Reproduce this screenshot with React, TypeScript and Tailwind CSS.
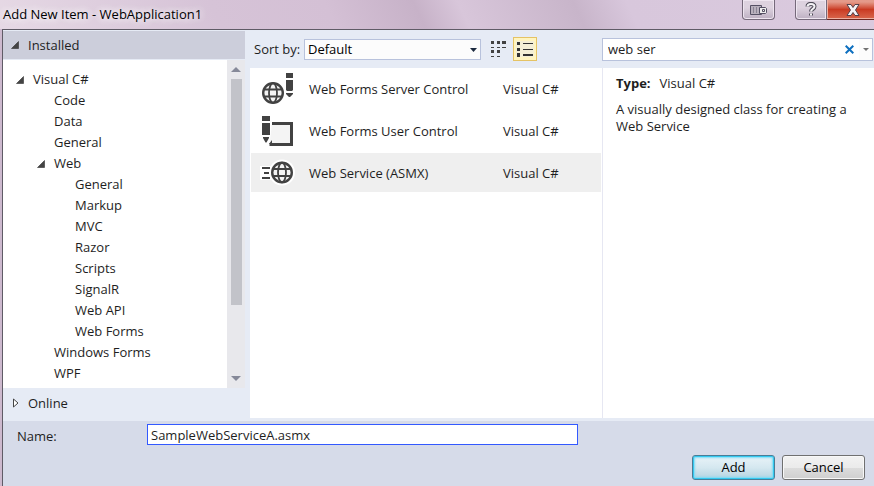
import { useState } from "react";

type Node = { label: string; level: 0 | 1 | 2; open?: boolean };

const TREE: Node[] = [
  { label: "Visual C#", level: 0, open: true },
  { label: "Code", level: 1 },
  { label: "Data", level: 1 },
  { label: "General", level: 1 },
  { label: "Web", level: 1, open: true },
  { label: "General", level: 2 },
  { label: "Markup", level: 2 },
  { label: "MVC", level: 2 },
  { label: "Razor", level: 2 },
  { label: "Scripts", level: 2 },
  { label: "SignalR", level: 2 },
  { label: "Web API", level: 2 },
  { label: "Web Forms", level: 2 },
  { label: "Windows Forms", level: 1 },
  { label: "WPF", level: 1 },
];

const INDENT = { 0: "pl-3", 1: "pl-[33px]", 2: "pl-[54px]" };

function OpenArrow() {
  return (
    <svg className="size-2 shrink-0" viewBox="0 0 8 8" aria-hidden="true">
      <path d="M7.5 0.5V7.5H0.5z" fill="#444" stroke="#333" strokeWidth="0.6" />
    </svg>
  );
}

function Globe({ cx, cy }: { cx: number; cy: number }) {
  return (
    <g transform={`translate(${cx} ${cy})`} fill="none" stroke="#424242" strokeWidth="1.8">
      <circle r="9.8" fill="#f4f4f4" strokeWidth="2.4" />
      <ellipse rx="4" ry="9.8" />
      <path d="M-9 -3.500H9M-9 3.500H9" />
    </g>
  );
}

function ServerControlIcon() {
  return (
    <svg className="size-8 shrink-0" viewBox="0 0 32 32" aria-hidden="true">
      <Globe cx={11} cy={20} />
      <path d="M24 0h7v5h-7zM24 7h7v10l-1 1h-5l-1-1zM24 20h7v1L28 24h-1L24 21z" fill="#424242" />
    </svg>
  );
}

function UserControlIcon() {
  return (
    <svg className="size-8 shrink-0" viewBox="0 0 32 32" aria-hidden="true">
      <path d="M10 8.500H29.500V29.500H7.500" fill="#f4f4f4" stroke="#424242" strokeWidth="3" />
      <path d="M0 1h8v5H0zM0 8h8v12H0zM1 22h6v1L4.500 27.500h-1L1 23zM10 25v4H7z" fill="#424242" />
    </svg>
  );
}

function WebServiceIcon() {
  return (
    <svg className="size-8 shrink-0 overflow-visible" viewBox="0 0 32 32" aria-hidden="true">
      <path d="M-2 9H20V23H-2z" fill="#fff" />
      <circle cx="20" cy="15.500" r="13" fill="#fff" />
      <path d="M0 11h8M2 16h5M0 21h8" stroke="#424242" strokeWidth="2" />
      <Globe cx={20} cy={15.5} />
    </svg>
  );
}

const ITEMS = [
  { name: "Web Forms Server Control", Icon: ServerControlIcon },
  { name: "Web Forms User Control", Icon: UserControlIcon },
  { name: "Web Service (ASMX)", Icon: WebServiceIcon },
];

function TitleBar() {
  const glass = "flex h-5 items-center justify-center border border-t-0 border-[#75697a] bg-linear-to-b from-[#ddd2df] from-40% to-[#bdb0c2] shadow-[inset_0_0_0_1px_#eee5f0]";
  return (
    <header className="flex h-[29px] items-start bg-[linear-gradient(65deg,#e6d9e5_0%,#d6c3d7_25%,#d4c0d5_38%,#c7b2c8_48%,#d8c6da_53%,#c8b5ca_66%,#d8c7dc_72%,#dacade_100%)]">
      <h1 className="flex-1 pt-1 pl-[3px] text-[13px] leading-5 text-black [text-shadow:0_0_8px_white,0_0_8px_white]">
        Add New Item - WebApplication1
      </h1>
      <button aria-label="Dock" className={`${glass} w-[33px] rounded-b`}>
        <svg className="h-[10px] w-[17px]" viewBox="0 0 17 10" fill="none" stroke="#555064" aria-hidden="true">
          <path d="M0.500 0.500H11.500V9.500H0.500z" fill="#b8b0bd" />
          <path d="M3.500 2v6M6.500 2v6" stroke="#8a8494" />
          <path d="M9.500 2.500H15.500l1 1V7.500l-1 1H9.500z" fill="#eee" />
          <path d="M12.500 4.500h2v2h-2z" />
        </svg>
      </button>
      <div className="ml-5 flex">
        <button aria-label="Help" className={`${glass} w-8 rounded-bl`}>
          <svg className="h-[15px] w-3" viewBox="0 0 12 15" fill="none" aria-hidden="true">
            <path d="M2.500 4.500C2.500 1 9.500 1 9.500 4.500C9.500 7 6 7 6 9.500M6 11.500V13.500" stroke="#4c4856" strokeWidth="4" />
            <path d="M2.500 4.500C2.500 1 9.500 1 9.500 4.500C9.500 7 6 7 6 9.500M6 11.500V13.500" stroke="#f5f3f6" strokeWidth="2" />
          </svg>
        </button>
        <button
          aria-label="Close"
          className="flex h-5 w-[47px] items-center justify-center border-b border-[#6d2923] bg-linear-to-b from-[#e49a8a] from-10% via-[#c93a22] via-50% to-[#d9664c] pl-1 shadow-[inset_1px_-1px_0_0_#eeb0a2]"
        >
          <svg className="h-3 w-[14px]" viewBox="0 0 14 12" aria-hidden="true">
            <path d="M1 0.500H5L7 3.500L9 0.500H13L9.500 6L13 11.500H9L7 8.500L5 11.500H1L4.500 6z" fill="#f5f3f6" stroke="#54404a" />
          </svg>
        </button>
      </div>
    </header>
  );
}

function Sidebar() {
  return (
    <nav className="flex w-[242px] shrink-0 flex-col pt-px" aria-label="Categories">
      <button className="flex h-7 items-center gap-[9px] bg-[#cccedb] pl-2">
        <OpenArrow />
        <span>Installed</span>
      </button>
      <div className="mt-px flex flex-1 bg-white">
        <ul className="flex-1 pt-[9px] pb-1">
          {TREE.map((n, i) => (
            <li key={i} className={`flex h-[21px] items-center ${INDENT[n.level]}`}>
              <span className="flex w-[18px] shrink-0 pl-px">{n.open && <OpenArrow />}</span>
              <span className="whitespace-nowrap">{n.label}</span>
            </li>
          ))}
        </ul>
        <div className="flex w-[18px] flex-col items-center bg-[#e8e8ec] py-[7px]">
          <svg className="h-[5px] w-[10px]" viewBox="0 0 10 5" fill="#868999" aria-hidden="true">
            <path d="M5 0L10 5H0z" />
          </svg>
          <div className="mt-[7px] w-[11px] flex-1 bg-[#c2c3c9]" />
          <svg className="mt-[71px] h-[5px] w-[10px]" viewBox="0 0 10 5" fill="#868999" aria-hidden="true">
            <path d="M0 0H10L5 5z" />
          </svg>
        </div>
      </div>
      <button className="mb-[3px] flex h-[30px] items-center gap-[9px] pl-[10px]">
        <svg className="h-[10px] w-[6px]" viewBox="0 0 6 10" fill="#fff" stroke="#444" aria-hidden="true">
          <path d="M0.500 1V9L5 5z" />
        </svg>
        <span>Online</span>
      </button>
    </nav>
  );
}

function Toolbar({ query, setQuery }: { query: string; setQuery: (v: string) => void }) {
  return (
    <div className="flex h-[38px] items-center">
      <div className="flex flex-1 items-center pl-1">
        <label htmlFor="sort" className="w-[50px]">
          Sort by:
        </label>
        <div className="relative">
          <select id="sort" className="block h-[21px] w-[177px] appearance-none border border-[#b8c2dc] bg-[#fcfcfc] pl-[3px] leading-[19px] text-black">
            <option>Default</option>
          </select>
          <svg className="pointer-events-none absolute top-[9px] right-1 h-[4px] w-[7px]" viewBox="0 0 7 4" fill="#1b293e" aria-hidden="true">
            <path d="M0 0H7L3.500 4z" />
          </svg>
        </div>
        <button aria-label="Small icons" className="ml-[5px] flex size-6 items-center justify-center">
          <svg className="h-4 w-4" viewBox="0 0 16 16" fill="#424242" aria-hidden="true">
            <path d="M1 0h3v3H1zM7 0h3v3H7zM12 0h4v3h-4zM1 6h3v1H1zM7 6h3v1H7zM12 6h4v1h-4zM1 9h3v3H1zM7 9h3v3H7zM1 15h3v1H1zM7 15h3v1H7z" />
          </svg>
        </button>
        <button aria-label="Medium icons" className="ml-[3px] flex size-6 items-center justify-center border border-[#e5c365] bg-[#fff4bf]">
          <svg className="h-4 w-[18px]" viewBox="0 0 18 16" aria-hidden="true">
            <path d="M0 0H18V16H0z" fill="#e9e9ee" opacity="0.500" />
            <path d="M1 1h3v3H1zM1 7h3v3H1zM1 12h3v4H1zM7 2h10v1H7zM7 8h10v1H7zM7 13h10v2H7z" fill="#333" />
          </svg>
        </button>
      </div>
      <div className="w-[272px] pr-px">
        <div className="flex h-[23px] items-center border border-[#b8c2dc] bg-white">
          <input
            aria-label="Search installed templates"
            value={query}
            onChange={(e) => setQuery(e.target.value)}
            className="h-full min-w-0 flex-1 pl-[5px] outline-none"
          />
          <button aria-label="Clear search" onClick={() => setQuery("")} className="flex h-full w-5 items-center justify-center">
            <svg className="size-[9px]" viewBox="0 0 9 9" stroke="#0e70c0" strokeWidth="2" aria-hidden="true">
              <path d="M0.700 0.700L8.300 8.300M8.300 0.700L0.700 8.300" />
            </svg>
          </button>
          <button aria-label="Search options" className="flex h-full w-[13px] items-center justify-center bg-[#fcfcfc]">
            <svg className="h-[3px] w-[6px]" viewBox="0 0 6 3" fill="#717171" aria-hidden="true">
              <path d="M0 0H6L3 3z" />
            </svg>
          </button>
        </div>
      </div>
    </div>
  );
}

export default function App() {
  const [query, setQuery] = useState("web ser");
  const [name, setName] = useState("SampleWebServiceA.asmx");
  const [selected, setSelected] = useState(2);

  return (
    <div className="flex min-h-screen flex-col bg-[#cdb9ce] font-['Open_Sans',sans-serif] text-[13px] leading-[17px] text-[#1e1e1e]">
      <TitleBar />
      <main className="ml-[2px] flex flex-1 flex-col border-t border-l border-[#5f5b66] bg-[#d6dbe9]">
        <div className="flex bg-[#e6ebf5]">
          <Sidebar />
          <section className="ml-[5px] flex min-w-0 flex-1 flex-col pb-[3px]">
            <Toolbar query={query} setQuery={setQuery} />
            <div className="flex flex-1 bg-white">
              <ul className="flex flex-1 flex-col gap-[3px] px-px pt-px">
                {ITEMS.map(({ name, Icon }, i) => (
                  <li key={name}>
                    <button
                      onClick={() => setSelected(i)}
                      className={`flex h-[39px] w-full items-center pt-px pl-[11px] text-left ${selected === i ? "bg-[#efefef]" : ""}`}
                    >
                      <Icon />
                      <span className="ml-[15px] flex-1">{name}</span>
                      <span className="w-[98px]">Visual C#</span>
                    </button>
                  </li>
                ))}
              </ul>
              <aside className="w-[272px] border-l border-[#e6e7f2] pt-[7px] pr-4 pl-[13px]">
                <p>
                  <strong className="mr-[9px] font-bold">Type:</strong>
                  Visual C#
                </p>
                <p className="mt-[9px]">A visually designed class for creating a Web Service</p>
              </aside>
            </div>
          </section>
        </div>
        <footer className="flex flex-1 flex-col pt-[3px] pl-[14px]">
          <div className="flex items-end">
            <label htmlFor="name" className="w-[130px]">
              Name:
            </label>
            <input
              id="name"
              value={name}
              onChange={(e) => setName(e.target.value)}
              className="h-[21px] w-[431px] border border-[#3359ff] bg-white pl-[3px] outline-none"
            />
          </div>
          <div className="mt-[10px] flex justify-end gap-[7px] pr-[9px] text-black">
            <button className="h-[25px] w-[83px] rounded-[3px] border border-[#4a7d96] bg-linear-to-b from-[#e9f3f8] from-0% via-[#d5e8f0] via-50% to-[#b4d3e0] shadow-[inset_0_0_0_1px_#33c8f0,inset_0_0_2px_2px_#7ddcf5]">
              Add
            </button>
            <button className="h-[25px] w-[83px] rounded-[3px] border border-[#707070] bg-[linear-gradient(#f2f2f2,#ebebeb_50%,#dddddd_50%,#cfcfcf)] shadow-[inset_0_0_0_1px_#f8f8f8]">
              Cancel
            </button>
          </div>
        </footer>
      </main>
    </div>
  );
}
